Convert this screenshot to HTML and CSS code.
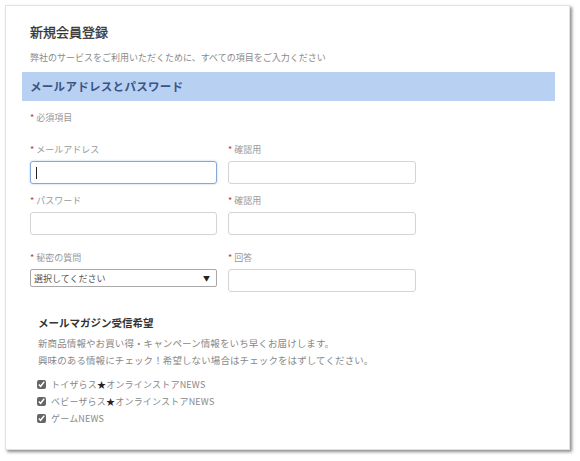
FILE: index.html
```html
<!DOCTYPE html>
<html lang="ja">
<head>
    <meta charset="UTF-8">
    <meta name="viewport" content="width=device-width, initial-scale=1.0">
    <link rel="stylesheet" href="styles.css">
    <title>新規会員登録</title>
</head>
<body>
    <div class="card">
        <h1 class="title">新規会員登録</h1>
        <p class="lead">弊社のサービスをご利用いただくために、すべての項目をご入力ください</p>

        <h2 class="bar">メールアドレスとパスワード</h2>
        <p class="required"><span class="mark">*</span> 必須項目</p>

        <div class="row row-first">
            <label class="field">
                <span class="label"><span class="mark">*</span> メールアドレス</span>
                <span class="input focused"><span class="caret"></span></span>
            </label>
            <label class="field">
                <span class="label"><span class="mark">*</span> 確認用</span>
                <span class="input"></span>
            </label>
        </div>
        <div class="row row-second">
            <label class="field">
                <span class="label"><span class="mark">*</span> パスワード</span>
                <span class="input"></span>
            </label>
            <label class="field">
                <span class="label"><span class="mark">*</span> 確認用</span>
                <span class="input"></span>
            </label>
        </div>
        <div class="row row-third">
            <label class="field">
                <span class="label"><span class="mark">*</span> 秘密の質問</span>
                <span class="select">選択してください<span class="arrow">▼</span></span>
            </label>
            <label class="field">
                <span class="label"><span class="mark">*</span> 回答</span>
                <span class="input"></span>
            </label>
        </div>

        <div class="magazine">
            <h3 class="mag-title">メールマガジン受信希望</h3>
            <p class="mag-text">新商品情報やお買い得・キャンペーン情報をいち早くお届けします。<br>興味のある情報にチェック！希望しない場合はチェックをはずしてください。</p>
            <ul class="checks">
                <li><label><input type="checkbox" checked><span>トイザらス<b class="star">★</b>オンラインストアNEWS</span></label></li>
                <li><label><input type="checkbox" checked><span>ベビーザらス<b class="star">★</b>オンラインストアNEWS</span></label></li>
                <li><label><input type="checkbox" checked><span>ゲームNEWS</span></label></li>
            </ul>
        </div>
    </div>
</body>
</html>
```

FILE: styles.css
```css
body {
    margin: 0;
    background-color: #fff;
    color: #333;
    font-family: "Noto Sans CJK JP", "Noto Sans", sans-serif;
}

.card {
    box-sizing: border-box;
    width: 565px;
    height: 445px;
    margin: 5px;
    padding: 16px 14px 0 16px;
    border: 1px solid #e2e2e2;
    box-shadow: 2px 2px 3px rgba(0, 0, 0, 0.45);
}

.title {
    margin: 0;
    padding-left: 8px;
    font-size: 13px;
    line-height: 20px;
    font-weight: normal;
    -webkit-text-stroke: 0.3px #333;
}

.lead {
    margin: 9px 0 0;
    padding-left: 8px;
    font-size: 9px;
    line-height: 14px;
    color: #8a8a8a;
}

.bar {
    margin: 7px 0 0;
    height: 29px;
    padding-left: 8px;
    background-color: #b8d0f2;
    color: #3b5486;
    font-size: 11.5px;
    font-weight: bold;
    line-height: 29px;
    letter-spacing: 0.3px;
}

.required {
    margin: 11px 0 0;
    padding-left: 8px;
    font-size: 9px;
    line-height: 12px;
    color: #999;
}

.mark {
    color: #c0392b;
}

.row {
    display: grid;
    grid-template-columns: 187px 188px;
    column-gap: 11px;
    padding-left: 8px;
}

.row-first { margin-top: 20px; }
.row-second { margin-top: 11px; }
.row-third { margin-top: 17px; }

.field {
    display: flex;
    flex-direction: column;
    gap: 5px;
}

.label {
    font-size: 9px;
    line-height: 12px;
    color: #999;
}

.input {
    box-sizing: border-box;
    display: flex;
    align-items: center;
    height: 23px;
    padding-left: 5px;
    border: 1px solid #d4d4d4;
    border-radius: 3px;
}

.focused {
    border-color: #86a8d6;
    box-shadow: 0 0 2px rgba(90, 140, 210, 0.5);
}

.caret {
    width: 1px;
    height: 12px;
    background-color: #222;
}

.select {
    box-sizing: border-box;
    display: flex;
    justify-content: space-between;
    align-items: center;
    height: 18px;
    padding: 0 6px 0 3px;
    border: 1px solid #a8a8a8;
    border-radius: 2px;
    font-size: 9px;
    color: #555;
}

.arrow {
    font-size: 7px;
    color: #222;
}

.magazine {
    margin-top: 23px;
    padding-left: 16px;
}

.mag-title {
    margin: 0;
    font-size: 10.5px;
    line-height: 16px;
    font-weight: bold;
    color: #333;
}

.mag-text {
    margin: 4px 0 0;
    font-size: 9.5px;
    line-height: 17px;
    letter-spacing: 0.1px;
    color: #888;
}

.checks {
    list-style-type: none;
    margin: 7px 0 0;
    padding: 0;
}

.checks li {
    font-size: 9px;
    line-height: 17px;
    letter-spacing: 0.2px;
    color: #888;
}

.checks label {
    display: flex;
    align-items: center;
    gap: 5px;
}

.checks input {
    width: 9px;
    height: 9px;
    margin: 0 0 0 -1px;
    accent-color: #666;
}

.star {
    color: #222;
    font-weight: normal;
}
```
